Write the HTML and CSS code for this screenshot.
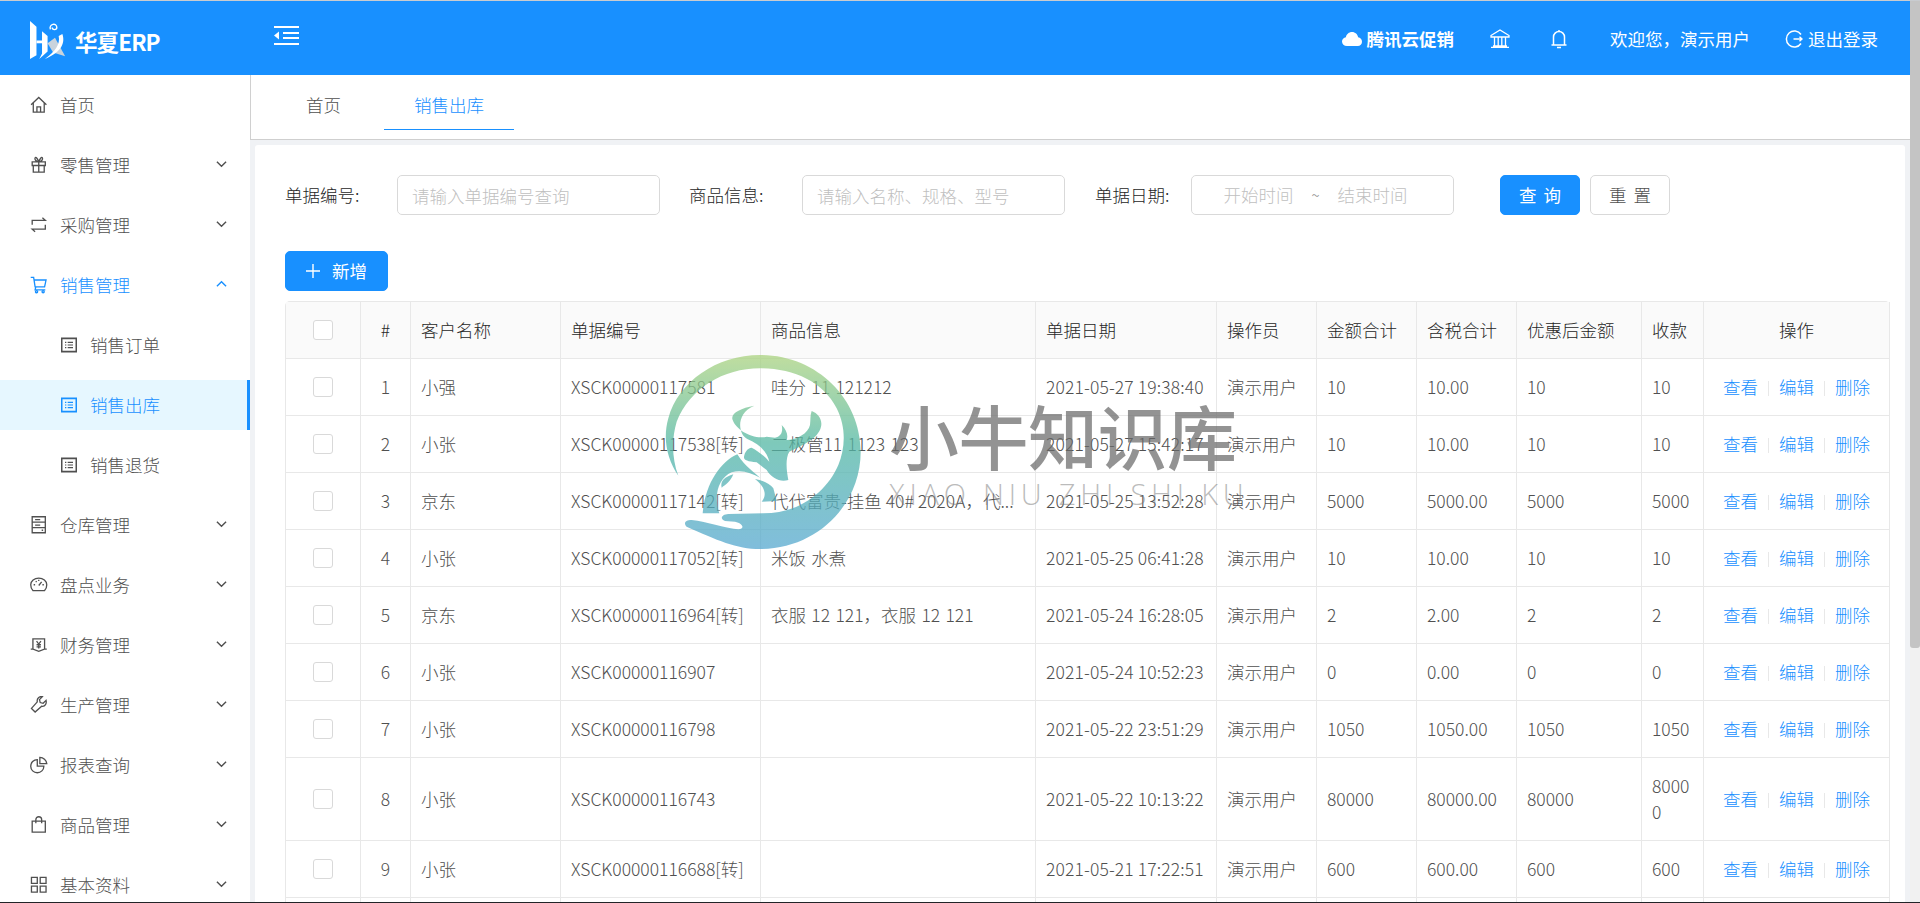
FILE: index.html
```html
<!DOCTYPE html>
<html lang="zh-CN">
<head>
<meta charset="utf-8">
<title>销售出库 - 华夏ERP</title>
<link rel="stylesheet" href="styles.css">
</head>
<body>
<div class="edge-top"></div>
<div class="window">
  <div class="app">
    <header class="topbar">
      <div class="brand">
        <svg class="logo" viewBox="0 0 40 42" aria-hidden="true">
          <path class="logo-grey" d="M19 24 L27 18 L38 38 L25 34 Z"/>
          <path class="logo-white" d="M0 0 L7 6 V37 L0 41 Z"/>
          <path class="logo-white" d="M7 21 H15 V24 H7 Z"/>
          <path class="logo-white" d="M13 11 L19 16 V33 L10 41 L13 35 Z"/>
          <path class="logo-white" d="M35 14 C39 26 31 35 16 41 C27 33 33 25 31 16 Z"/>
          <path class="logo-line" d="M22 9 C20 3 29 1 29 7 C29 10 24 10 24 7"/>
        </svg>
        <span class="brand-name">华夏ERP</span>
      </div>
      <svg class="fold" viewBox="0 0 25 21" aria-hidden="true">
        <path d="M0 1h25v2H0zM0 18h25v2H0zM9 7h16v2H9zM9 12h16v2H9z"/>
        <path d="M5 6.500v8L0 10.500z"/>
      </svg>
      <div class="top-right">
        <div class="promo">
          <svg class="cloud" viewBox="0 0 20 14" aria-hidden="true"><path d="M5 14C2 14 0 12 0 9.500 0 7.200 1.700 5.500 3.900 5.200 4.500 2.200 7 0 10 0c3.200 0 5.700 2.300 6.100 5.300C18.400 5.600 20 7.400 20 9.700 20 12 18.200 14 15.800 14z"/></svg>
          <span>腾讯云促销</span>
        </div>
        <svg class="bank" viewBox="0 0 20 19" aria-hidden="true"><path d="M1 6.500 10 1l9 5.500V8H1zM3 17h14M1 18.500h18M4.500 8v9M8.200 8v9M11.800 8v9M15.500 8v9"/></svg>
        <svg class="bell" viewBox="0 0 16 20" aria-hidden="true"><path d="M8 1v1.500M2.500 15.500V8a5.500 5.500 0 0 1 11 0v7.500M.5 16h15M6 18.500h4"/></svg>
        <span class="welcome">欢迎您，演示用户</span>
        <div class="logout">
          <svg viewBox="0 0 18 18" aria-hidden="true"><path d="M16 4.500A8 8 0 1 0 16 13.500M8.500 9H17M14.500 6.800 17 9l-2.500 2.200"/></svg>
          <span>退出登录</span>
        </div>
      </div>
    </header>
    <div class="below">
      <nav class="sidebar">
        <a class="item"><svg class="ico" viewBox="0 0 24 24"><path d="M1.500 12 12 2l10.500 10M4.500 9.500V22h15V9.500M9.500 22v-7h5v7"/></svg><span>首页</span></a>
        <a class="item"><svg class="ico" viewBox="0 0 24 24"><path d="M3 8h18v5H3zM4.500 13v9h15v-9M12 8v14M12 8C10 3 8 1 7 2.500S8 8 12 8c4 0 6-4 5-5.500S14 3 12 8"/></svg><span>零售管理</span><svg class="chev" viewBox="0 0 12 8"><path d="M1 1.500 6 6.500l5-5"/></svg></a>
        <a class="item"><svg class="ico" viewBox="0 0 24 24"><path d="M3 12V6h18l-4-3.500M21 12v6H3l4 3.500"/></svg><span>采购管理</span><svg class="chev" viewBox="0 0 12 8"><path d="M1 1.500 6 6.500l5-5"/></svg></a>
        <a class="item on"><svg class="ico" viewBox="0 0 24 24"><path d="M1 2h4l2 13h13l2-9.500H6M8 15l-1 4h14"/><circle cx="9" cy="21.500" r="1.500"/><circle cx="18" cy="21.500" r="1.500"/></svg><span>销售管理</span><svg class="chev" viewBox="0 0 12 8"><path d="M1 6.500 6 1.500l5 5"/></svg></a>
        <a class="item sub"><svg class="ico" viewBox="0 0 24 24"><path class="box" d="M1 2h22v20H1z"/><path d="M10 8h8M10 12h8M10 16h8M6 8h2M6 12h2M6 16h2"/></svg><span>销售订单</span></a>
        <a class="item sub active"><svg class="ico" viewBox="0 0 24 24"><path class="box" d="M1 2h22v20H1z"/><path d="M10 8h8M10 12h8M10 16h8M6 8h2M6 12h2M6 16h2"/></svg><span>销售出库</span></a>
        <a class="item sub"><svg class="ico" viewBox="0 0 24 24"><path class="box" d="M1 2h22v20H1z"/><path d="M10 8h8M10 12h8M10 16h8M6 8h2M6 12h2M6 16h2"/></svg><span>销售退货</span></a>
        <a class="item"><svg class="ico" viewBox="0 0 24 24"><path d="M3 1h18v22H3zM3 8.500h18M3 16h18M7 5h7M7 12.500h7M16 19.500h2"/></svg><span>仓库管理</span><svg class="chev" viewBox="0 0 12 8"><path d="M1 1.500 6 6.500l5-5"/></svg></a>
        <a class="item"><svg class="ico" viewBox="0 0 24 24"><path d="M4 20h16c2-2 3-5 3-8 0-5-5-9-11-9S1 7 1 12c0 3 1 6 3 8zM12 13l4-5M5 12h2M17 12h2M8 7l1 1.500M12 5v2"/></svg><span>盘点业务</span><svg class="chev" viewBox="0 0 12 8"><path d="M1 1.500 6 6.500l5-5"/></svg></a>
        <a class="item"><svg class="ico" viewBox="0 0 24 24"><path d="M4 4h16v14l-8 3-8-3zM1 18l3 0M20 18l3 0M9 7l3 4 3-4M12 11v6M9 12h6M9 15h6"/></svg><span>财务管理</span><svg class="chev" viewBox="0 0 12 8"><path d="M1 1.500 6 6.500l5-5"/></svg></a>
        <a class="item"><svg class="ico" viewBox="0 0 24 24"><path d="M22 6l-4 4-4-1-1-4 4-4c-4-1-8 2-7 7L2 17l5 5 9-8c5 1 7-4 6-8z"/></svg><span>生产管理</span><svg class="chev" viewBox="0 0 12 8"><path d="M1 1.500 6 6.500l5-5"/></svg></a>
        <a class="item"><svg class="ico" viewBox="0 0 24 24"><path d="M10 5a9 9 0 1 0 9 9h-9zM13.500 2v8.500H23A9.500 9.500 0 0 0 13.500 2z"/></svg><span>报表查询</span><svg class="chev" viewBox="0 0 12 8"><path d="M1 1.500 6 6.500l5-5"/></svg></a>
        <a class="item"><svg class="ico" viewBox="0 0 24 24"><path d="M3 7h18v15H3zM8 10V5a4 4 0 0 1 8 0v5"/></svg><span>商品管理</span><svg class="chev" viewBox="0 0 12 8"><path d="M1 1.500 6 6.500l5-5"/></svg></a>
        <a class="item"><svg class="ico" viewBox="0 0 24 24"><path d="M2 2h8v8H2zM14 2h8v8h-8zM2 14h8v8H2zM14 14h8v8h-8z"/></svg><span>基本资料</span><svg class="chev" viewBox="0 0 12 8"><path d="M1 1.500 6 6.500l5-5"/></svg></a>
      </nav>
      <main class="main">
        <div class="tabs">
          <a class="tab">首页</a>
          <a class="tab tab-on">销售出库</a>
        </div>
        <section class="card">
          <form class="filters">
            <label class="lbl">单据编号:</label>
            <input class="inp inp-a" placeholder="请输入单据编号查询">
            <label class="lbl lbl-b">商品信息:</label>
            <input class="inp inp-a inp-b" placeholder="请输入名称、规格、型号">
            <label class="lbl lbl-c">单据日期:</label>
            <div class="inp date"><span>开始时间</span><i>~</i><span>结束时间</span></div>
            <button type="button" class="btn primary q">查 询</button>
            <button type="button" class="btn r">重 置</button>
          </form>
          <button type="button" class="btn primary add"><svg viewBox="0 0 14 14"><path d="M7 0v14M0 7h14"/></svg><span>新增</span></button>
          <table class="grid">
            <thead>
              <tr><th class="c1 ctr"><b class="cb"></b></th><th class="c2 ctr">#</th><th class="c3">客户名称</th><th class="c4">单据编号</th><th class="c5">商品信息</th><th class="c6">单据日期</th><th class="c7">操作员</th><th class="c8">金额合计</th><th class="c9">含税合计</th><th class="c10">优惠后金额</th><th class="c11">收款</th><th class="c12 ctr">操作</th></tr>
            </thead>
            <tbody>
              <tr><td class="ctr"><b class="cb"></b></td><td class="ctr">1</td><td>小强</td><td>XSCK00000117581</td><td class="ws">哇分 11 121212</td><td class="nw">2021-05-27 19:38:40</td><td>演示用户</td><td>10</td><td>10.00</td><td>10</td><td>10</td><td class="ctr ops"><a>查看</a><s></s><a>编辑</a><s></s><a>删除</a></td></tr>
              <tr><td class="ctr"><b class="cb"></b></td><td class="ctr">2</td><td>小张</td><td>XSCK00000117538[转]</td><td class="ws">二极管11 1123 123</td><td class="nw">2021-05-27 15:42:17</td><td>演示用户</td><td>10</td><td>10.00</td><td>10</td><td>10</td><td class="ctr ops"><a>查看</a><s></s><a>编辑</a><s></s><a>删除</a></td></tr>
              <tr><td class="ctr"><b class="cb"></b></td><td class="ctr">3</td><td>京东</td><td>XSCK00000117142[转]</td><td>代代富贵-挂鱼 40# 2020A，代...</td><td class="nw">2021-05-25 13:52:28</td><td>演示用户</td><td>5000</td><td>5000.00</td><td>5000</td><td>5000</td><td class="ctr ops"><a>查看</a><s></s><a>编辑</a><s></s><a>删除</a></td></tr>
              <tr><td class="ctr"><b class="cb"></b></td><td class="ctr">4</td><td>小张</td><td>XSCK00000117052[转]</td><td class="ws">米饭 水煮</td><td class="nw">2021-05-25 06:41:28</td><td>演示用户</td><td>10</td><td>10.00</td><td>10</td><td>10</td><td class="ctr ops"><a>查看</a><s></s><a>编辑</a><s></s><a>删除</a></td></tr>
              <tr><td class="ctr"><b class="cb"></b></td><td class="ctr">5</td><td>京东</td><td>XSCK00000116964[转]</td><td class="ws">衣服 12 121，衣服 12 121</td><td class="nw">2021-05-24 16:28:05</td><td>演示用户</td><td>2</td><td>2.00</td><td>2</td><td>2</td><td class="ctr ops"><a>查看</a><s></s><a>编辑</a><s></s><a>删除</a></td></tr>
              <tr><td class="ctr"><b class="cb"></b></td><td class="ctr">6</td><td>小张</td><td>XSCK00000116907</td><td></td><td class="nw">2021-05-24 10:52:23</td><td>演示用户</td><td>0</td><td>0.00</td><td>0</td><td>0</td><td class="ctr ops"><a>查看</a><s></s><a>编辑</a><s></s><a>删除</a></td></tr>
              <tr><td class="ctr"><b class="cb"></b></td><td class="ctr">7</td><td>小张</td><td>XSCK00000116798</td><td></td><td class="nw">2021-05-22 23:51:29</td><td>演示用户</td><td>1050</td><td>1050.00</td><td>1050</td><td>1050</td><td class="ctr ops"><a>查看</a><s></s><a>编辑</a><s></s><a>删除</a></td></tr>
              <tr><td class="ctr"><b class="cb"></b></td><td class="ctr">8</td><td>小张</td><td>XSCK00000116743</td><td></td><td class="nw">2021-05-22 10:13:22</td><td>演示用户</td><td>80000</td><td>80000.00</td><td>80000</td><td>80000</td><td class="ctr ops"><a>查看</a><s></s><a>编辑</a><s></s><a>删除</a></td></tr>
              <tr><td class="ctr"><b class="cb"></b></td><td class="ctr">9</td><td>小张</td><td>XSCK00000116688[转]</td><td></td><td class="nw">2021-05-21 17:22:51</td><td>演示用户</td><td>600</td><td>600.00</td><td>600</td><td>600</td><td class="ctr ops"><a>查看</a><s></s><a>编辑</a><s></s><a>删除</a></td></tr>
              <tr class="tail"><td></td><td></td><td></td><td></td><td></td><td></td><td></td><td></td><td></td><td></td><td></td><td></td></tr>
            </tbody>
          </table>
        </section>
      </main>
    </div>
  </div>
  <div class="scrollbar"><div class="thumb"></div></div>
</div>
<div class="edge-bottom"></div>

<svg class="wm-mark" viewBox="0 0 660 630" aria-hidden="true">
  <defs>
    <linearGradient id="wmg" gradientUnits="userSpaceOnUse" x1="0" y1="30" x2="0" y2="612">
      <stop offset="0" stop-color="#abd37f"/>
      <stop offset="0.45" stop-color="#54b8a4"/>
      <stop offset="1" stop-color="#56a8d0"/>
    </linearGradient>
  </defs>
  <g class="wm-shape" fill="url(#wmg)">
    <path d="M55 392C20 340 8 280 25 220 55 110 170 30 300 30 470 30 602 160 602 320 602 480 470 612 300 612 230 612 170 585 80 545 70 535 75 525 95 525 140 530 200 550 235 553 255 552 250 535 225 530L195 528C178 522 185 508 205 507L310 505C420 505 500 440 535 360 555 310 560 250 530 190 490 110 400 70 300 70 190 70 90 130 50 230 35 280 35 340 55 392Z"/>
    <path d="M283 182C240 190 210 205 218 225 228 255 280 285 320 275L345 278C362 275 370 262 365 240 380 255 385 270 380 285 410 285 445 265 450 240 452 225 450 210 455 198 475 205 488 225 483 245 475 280 430 300 388 320 375 340 380 380 385 405 360 412 335 400 320 375L290 352C262 350 250 345 252 335 255 320 262 310 275 308 295 318 315 335 328 350 322 322 300 298 262 282 235 270 225 205 283 182Z"/>
    <path d="M232 328C180 350 135 420 128 505L178 505C160 450 175 400 215 382 245 372 275 385 300 398 290 388 255 365 232 328Z"/>
    <path d="M285 402C305 405 330 415 340 430L350 468 305 470C322 450 315 425 285 402Z"/>
    <path d="M220 388C195 395 180 408 185 428 195 420 212 410 220 388Z"/>
  </g>
</svg>
<div class="wm-title">小牛知识库</div>
<div class="wm-sub">XIAO NIU ZHI SHI KU</div>
</body>
</html>
```
FILE: styles.css
```css
* { box-sizing: border-box; }
html, body { margin: 0; height: 903px; overflow: hidden; }
body {
  position: relative;
  display: flex;
  flex-direction: column;
  font-family: "Noto Sans CJK SC", "Noto Sans", sans-serif;
  font-size: 17.5px;
  font-weight: 300;
  line-height: 26px;
  color: #505050;
  background: #f0f2f5;
}
a { text-decoration: none; color: inherit; }
.edge-top { height: 1px; background: #c9ccd0; flex: none; }
.edge-bottom { height: 1px; background: #222428; flex: none; }
.window { flex: 1; min-height: 0; display: flex; }
.app { flex: 1; min-width: 0; display: flex; flex-direction: column; }
.scrollbar { width: 10px; background: #f1f1f1; flex: none; }
.thumb { height: 647px; background: #c4c4c4; border-radius: 0 0 3px 3px; }

/* top bar */
.topbar { height: 74px; flex: none; background: #1890ff; color: #fff; display: flex; align-items: center; }
.brand { width: 274px; padding-left: 30px; display: flex; align-items: center; flex: none; }
.logo { width: 37px; height: 39px; flex: none; margin-top: 5px; }
.logo-white { fill: #fff; }
.logo-grey { fill: #c9d3dc; }
.logo-line { fill: none; stroke: #fff; stroke-width: 1.5; }
.brand-name { margin-left: 8px; font-size: 22.500px; font-weight: 700; margin-top: 5px; letter-spacing: -.9px; }
.fold { width: 25px; height: 21px; fill: #fff; margin-top: -5px; }
.top-right { margin-left: auto; display: flex; align-items: center; padding-right: 32px; margin-top: 1px; font-weight: 400; }
.promo { display: flex; align-items: center; font-weight: 700; margin-right: -2px; }
.cloud { width: 20px; height: 14px; fill: #fff; margin-right: 5px; }
.bank { width: 20px; height: 19px; margin-left: 38px; fill: none; stroke: #fff; stroke-width: 1.300; }
.bell { width: 16px; height: 20px; margin-left: 41px; fill: none; stroke: #fff; stroke-width: 1.500; }
.welcome { margin-left: 43px; }
.logout { margin-left: 35px; display: flex; align-items: center; }
.logout svg { width: 18px; height: 18px; fill: none; stroke: #fff; stroke-width: 1.500; margin-right: 5px; }

/* sidebar */
.below { flex: 1; min-height: 0; display: flex; }
.sidebar { width: 250px; flex: none; background: #fff; padding-top: 5px; overflow: hidden; }
.item { height: 50px; margin-bottom: 10px; padding-left: 30px; display: flex; align-items: center; position: relative; }
.ico { width: 17.500px; height: 17.500px; flex: none; margin-right: 12.500px; fill: none; stroke: currentColor; stroke-width: 1.800; }
.chev { position: absolute; right: 23px; top: 20px; width: 11px; height: 8px; fill: none; stroke: currentColor; stroke-width: 1.500; }
.item.on { color: #1890ff; }
.item.sub { padding-left: 61px; }
.item.sub .ico { width: 16px; height: 16px; margin-right: 13px; }
.box { stroke-width: 2.500; }
.item.active { background: #e6f7ff; color: #1890ff; border-right: 3.500px solid #1890ff; }

/* main */
.main { flex: 1; min-width: 0; display: flex; flex-direction: column; }
.tabs { height: 65px; flex: none; background: #fff; border-left: 1px solid #d0d0d0; border-bottom: 1px solid #cfcfcf; padding-left: 25px; display: flex; gap: 13px; align-items: flex-start; }
.tab { height: 55px; padding: 5px 30px 0; display: flex; align-items: center; }
.tab-on { color: #1890ff; border-bottom: 1px solid #1890ff; }
.card { flex: 1; min-height: 0; margin: 5px 5px 0; background: #fff; border-radius: 3px 3px 0 0; padding: 30px 15px 0 30px; overflow: hidden; }

.filters { display: flex; align-items: center; height: 40px; }
.lbl { color: #262626; width: 112px; flex: none; }
.lbl-b { margin-left: 29px; width: 113px; }
.lbl-c { margin-left: 30px; width: 96px; }
.inp { height: 40px; border: 1px solid #d9d9d9; border-radius: 5px; padding: 0 14px; font: inherit; color: #595959; background: #fff; outline: none; flex: none; }
.inp-a { width: 263px; }
.inp::placeholder { color: #bfbfbf; opacity: 1; }
.date { width: 263px; display: flex; align-items: center; justify-content: center; gap: 18px; color: #bfbfbf; padding: 0 14px 0 0; }
.date i { font-style: normal; font-size: 15px; color: #8c8c8c; }
.btn { height: 40px; width: 80px; border: 1px solid #d9d9d9; border-radius: 5px; background: #fff; color: #505050; font: inherit; padding: 0; flex: none; word-spacing: 3px; }
.primary { background: #1890ff; border-color: #1890ff; color: #fff; font-weight: 400; }
.q { margin-left: 46px; }
.r { margin-left: 10px; }
.add { display: flex; align-items: center; justify-content: center; width: 103px; margin-top: 36px; }
.add svg { width: 14px; height: 14px; fill: none; stroke: #fff; stroke-width: 1.400; margin-right: 12px; }

/* table */
.grid { margin-top: 10px; width: 1605px; table-layout: fixed; border-collapse: separate; border-spacing: 0; border-top: 1px solid #e8e8e8; border-left: 1px solid #e8e8e8; border-radius: 5px 5px 0 0; }
.grid th, .grid td { border-right: 1px solid #e8e8e8; border-bottom: 1px solid #e8e8e8; padding: 15px 10px; text-align: left; font-weight: 300; word-break: break-all; vertical-align: middle; }
.grid th { background: #fafafa; color: #262626; }
.grid .ctr { text-align: center; }
.grid .nw { white-space: nowrap; word-break: normal; letter-spacing: .13px; }
.grid .ws { word-spacing: 1.500px; }
.tail td { height: 57px; }
.c1 { width: 75px; } .c2 { width: 50px; } .c3 { width: 150px; } .c4 { width: 200px; }
.c5 { width: 275px; } .c6 { width: 181px; } .c7 { width: 100px; } .c8 { width: 100px; }
.c9 { width: 100px; } .c10 { width: 125px; } .c11 { width: 62px; } .c12 { width: 186px; }
.cb { display: block; width: 20px; height: 20px; margin: 0 auto; background: #fff; border: 1px solid #d9d9d9; border-radius: 3px; }
.ops { white-space: nowrap; color: #1890ff; }
.ops s { display: inline-block; width: 1px; height: 15px; margin: 0 10px; background: #e8e8e8; vertical-align: -2px; }

/* watermark overlay */
.wm-mark { position: absolute; left: 660px; top: 345px; width: 220px; height: 210px; pointer-events: none; }
.wm-shape { opacity: .75; }
.wm-title { position: absolute; left: 889px; top: 385px; font-size: 70px; font-weight: 500; line-height: 100px; letter-spacing: -.5px; color: rgba(105,105,105,.72); white-space: nowrap; pointer-events: none; }
.wm-sub { position: absolute; left: 889px; top: 474px; font-family: "Open Sans", sans-serif; font-weight: 300; font-size: 29px; line-height: 40px; letter-spacing: 4.800px; color: rgba(120,120,120,.5); white-space: nowrap; pointer-events: none; }
```
